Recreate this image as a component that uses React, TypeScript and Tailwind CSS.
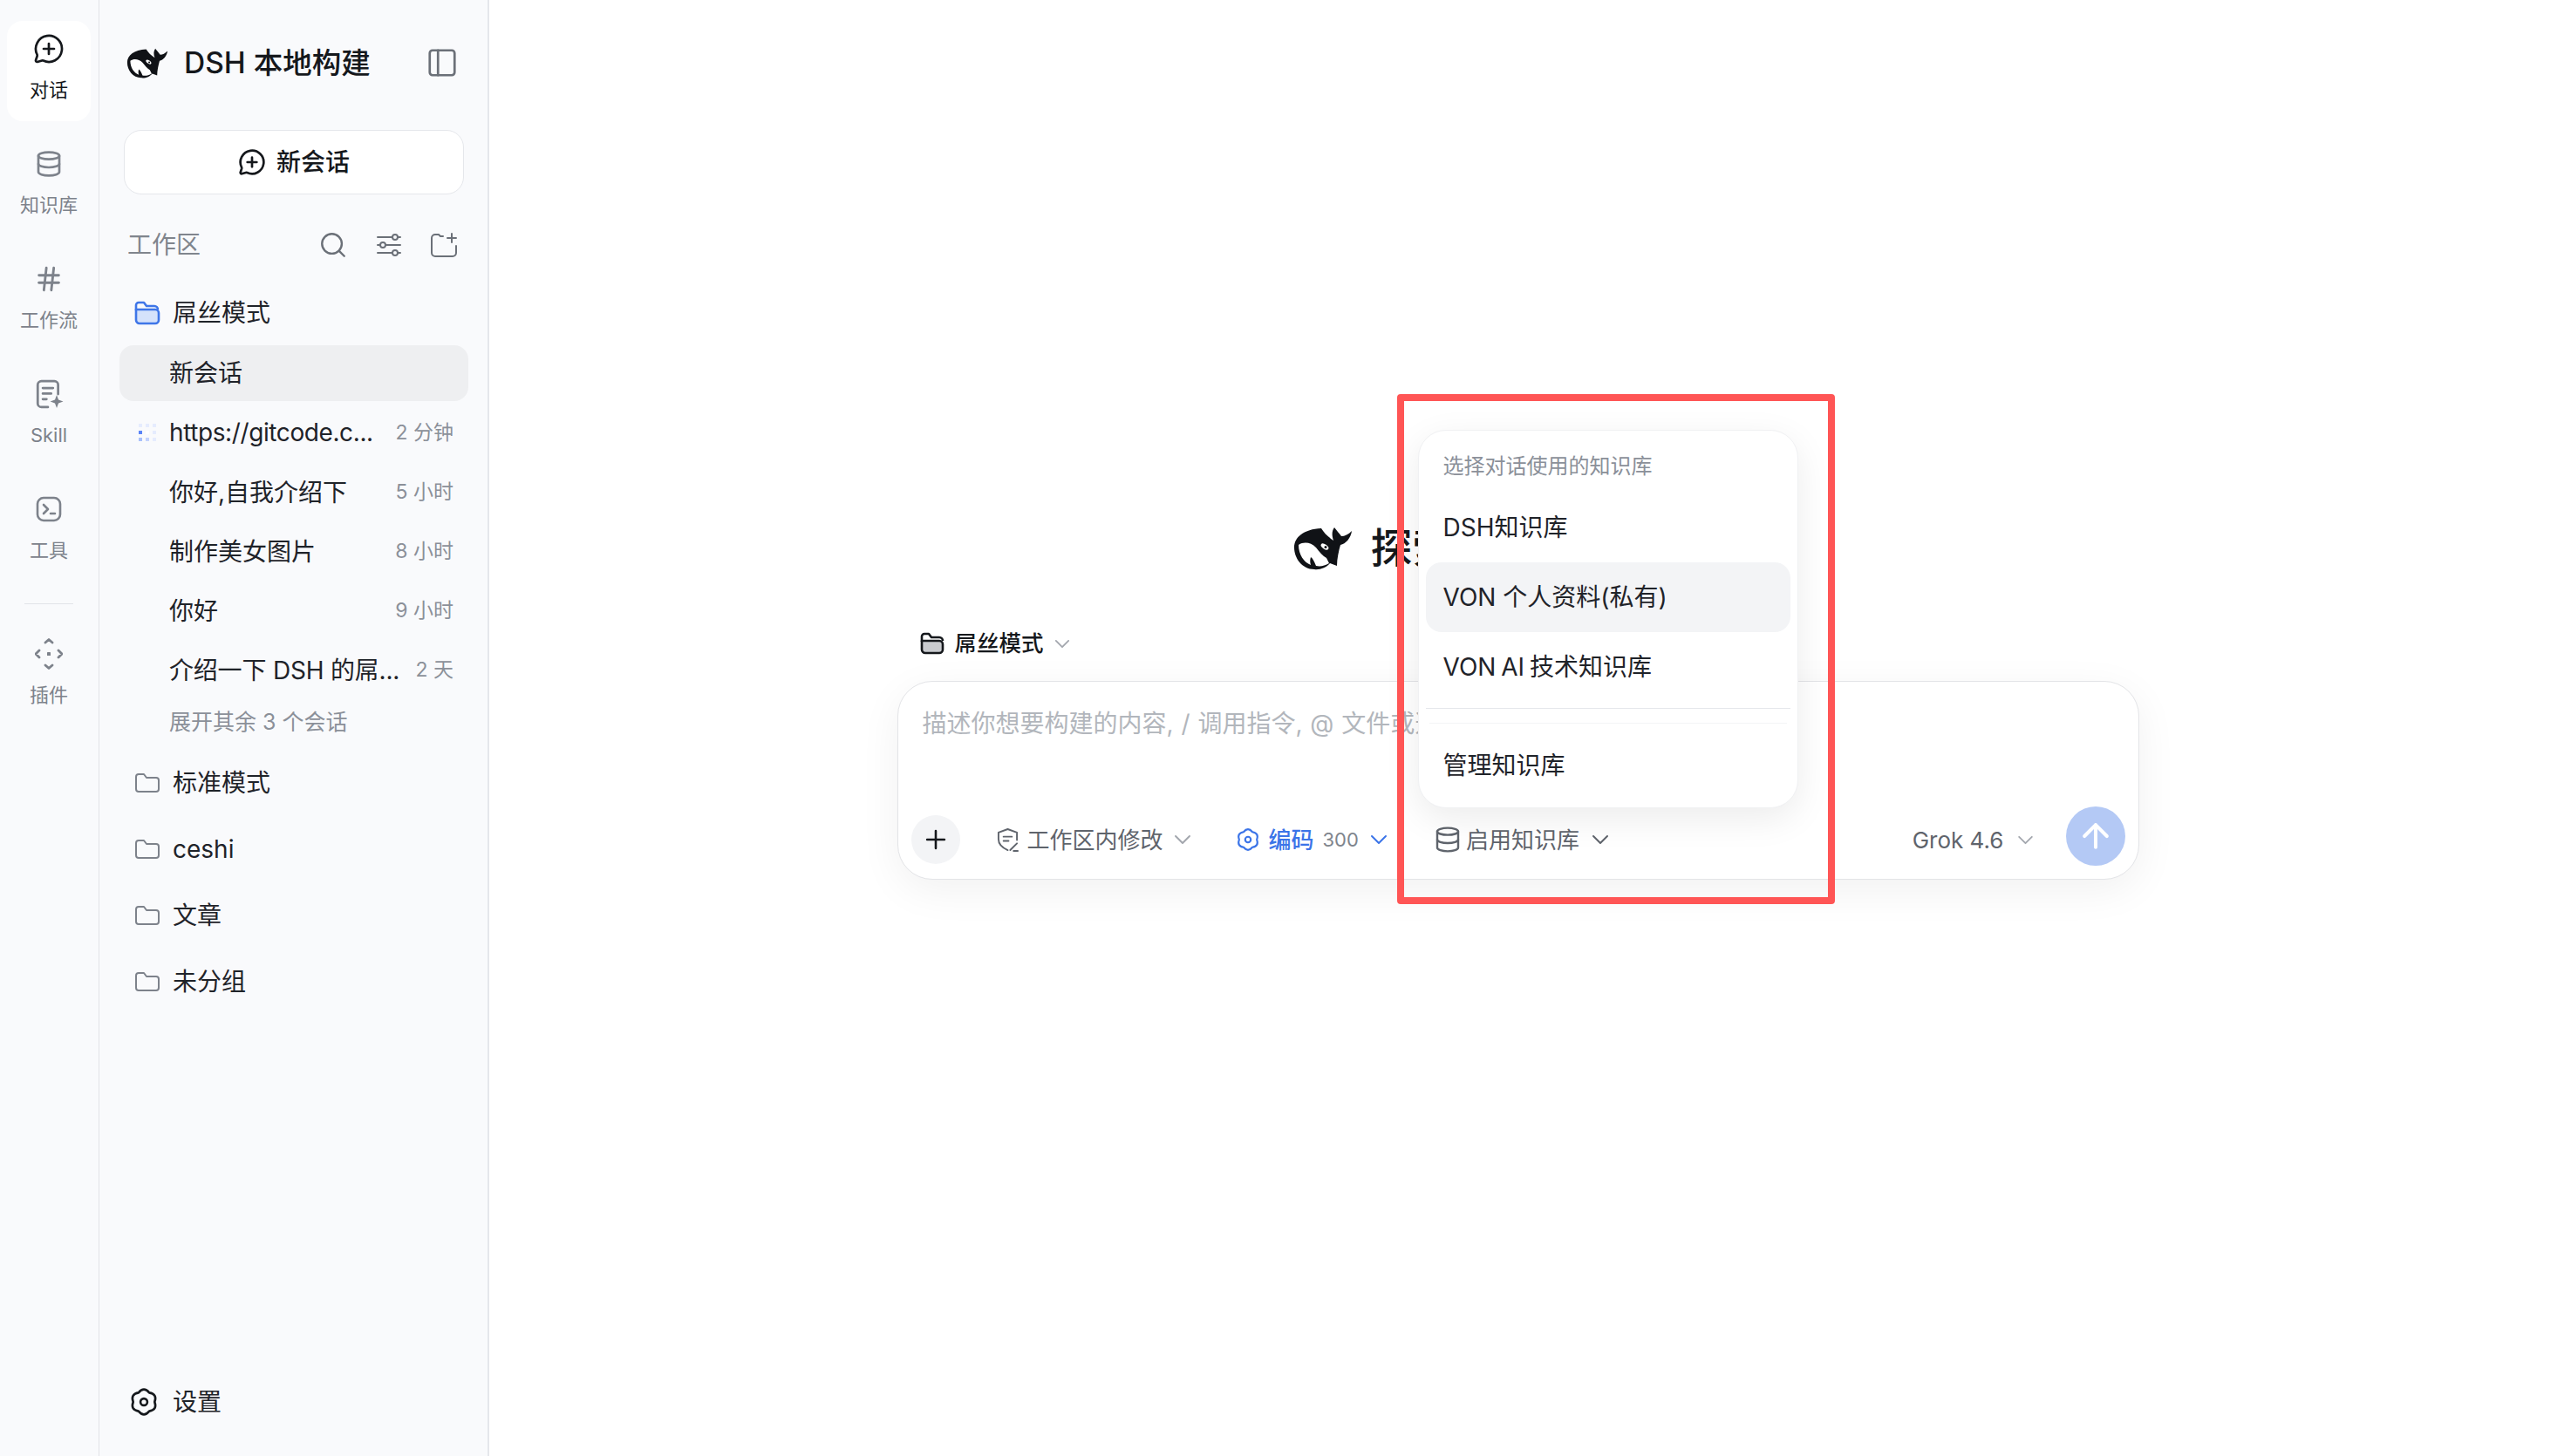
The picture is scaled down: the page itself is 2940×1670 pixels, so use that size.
import { ArrowUp, Database, Hash, MessageCirclePlus, PanelLeft, Plus, Search } from 'lucide-react';

// rounded six lobe gear used by settings and the coding mode
function flowerPath() {
  const pt = (r: number, deg: number) => {
    const a = (deg * Math.PI) / 180;
    return `${(12 + r * Math.cos(a)).toFixed(2)} ${(12 + r * Math.sin(a)).toFixed(2)}`;
  };
  let d = `M${pt(9.4, -60)}`;
  for (let i = 0; i < 6; i++) {
    const s = -60 + i * 60;
    d += ` Q${pt(13.8, s + 30)} ${pt(9.4, s + 60)}`;
  }
  return d + 'Z';
}

function Gear({ className }: { className: string }) {
  return (
    <svg viewBox="-1 -1 26 26" fill="none" stroke="currentColor" strokeWidth="2" strokeLinejoin="round" className={className}>
      <path d={flowerPath()} />
      <circle cx="12" cy="12" r="3" />
    </svg>
  );
}

function Whale({ className }: { className: string }) {
  return (
    <svg viewBox="0 0 68 50" className={className}>
      <path
        fill="#101216"
        d="M1 24C1 12 12 3 32 2C35 7 40 12 46 16C44 10 44 5 47 1C50 5 53 8 55 11C59 11 63 9 67 5C66 13 60 20 54 21C52 28 50 37 50 45L42 42C38 47 30 50 24 49C10 49 1 36 1 24Z"
      />
      <path
        fill="#fff"
        d="M6 21C12 17 20 18 26 24C30 29 34 34 38 36L41 42C36 45 31 46 26 45C24 40 22 36 20 35C19 38 19 41 20 44C12 41 6 32 6 21Z"
      />
      <ellipse cx="36" cy="23" rx="5" ry="2.6" transform="rotate(35 36 23)" fill="#fff" />
      <circle cx="37" cy="23.5" r="1.5" fill="#101216" />
    </svg>
  );
}

function Chevron({ className }: { className: string }) {
  return (
    <svg viewBox="0 0 20 12" fill="none" stroke="currentColor" strokeWidth="2" strokeLinecap="round" strokeLinejoin="round" className={className}>
      <path d="M2 2l8 8 8-8" />
    </svg>
  );
}

function SkillIcon() {
  return (
    <svg viewBox="0 0 32 32" fill="none" stroke="currentColor" strokeWidth="2.6" strokeLinecap="round" strokeLinejoin="round" className="w-[34px] h-[34px]">
      <path d="M15 30H8a4 4 0 0 1-4-4V6a4 4 0 0 1 4-4h14a4 4 0 0 1 4 4v10" />
      <path d="M9.5 9.5h11M9.5 15.5h9M9.5 21.5h4" />
      <path fill="currentColor" stroke="none" d="M24.5 17l1.9 5.1 5.1 1.9-5.1 1.9-1.9 5.1-1.9-5.1-5.1-1.9 5.1-1.9z" />
    </svg>
  );
}

function TerminalIcon() {
  return (
    <svg viewBox="0 0 30 30" fill="none" stroke="currentColor" strokeWidth="2.6" strokeLinecap="round" strokeLinejoin="round" className="w-[30px] h-[30px]">
      <rect x="2" y="2" width="26" height="26" rx="7" />
      <path d="M9 10l5 5-5 5M17 20h5" />
    </svg>
  );
}

function PluginIcon() {
  return (
    <svg viewBox="0 0 32 36" fill="none" stroke="currentColor" strokeWidth="2.8" strokeLinecap="round" strokeLinejoin="round" className="w-[32px] h-[36px]">
      <path d="M12 5l4-3.5L20 5M12 31l4 3.5 4-3.5M5 14l-4 4 4 4M27 14l4 4-4 4" />
      <rect x="14" y="16" width="4" height="4" fill="currentColor" stroke="none" rx="0.6" />
    </svg>
  );
}

function FolderOpenBlue() {
  return (
    <svg viewBox="0 0 30 28" className="w-[30px] h-[28px]" fill="none" stroke="#3f76e8" strokeWidth="2.6" strokeLinejoin="round">
      <path fill="#d5e2fb" d="M2 10h22a4 4 0 0 1 4 4v8a4 4 0 0 1-4 4H6a4 4 0 0 1-4-4z" />
      <path d="M2 11V5a3 3 0 0 1 3-3h6l3 4h9a4 4 0 0 1 4 4" />
    </svg>
  );
}

function FolderClosed() {
  return (
    <svg viewBox="0 0 30 26" className="w-[30px] h-[26px]" fill="none" stroke="#7d828b" strokeWidth="2" strokeLinejoin="round">
      <path d="M2 6a3 3 0 0 1 3-3h6l3 4h11a3 3 0 0 1 3 3v10a3 3 0 0 1-3 3H5a3 3 0 0 1-3-3z" />
    </svg>
  );
}

function FolderGray() {
  return (
    <svg viewBox="0 0 28 26" className="w-[28px] h-[26px]" fill="none" stroke="#15181c" strokeWidth="2.6" strokeLinejoin="round">
      <path fill="#c9cbcf" d="M2 10h20a4 4 0 0 1 4 4v6a4 4 0 0 1-4 4H6a4 4 0 0 1-4-4z" />
      <path d="M2 11V5a3 3 0 0 1 3-3h5l3 4h9a4 4 0 0 1 4 4" />
    </svg>
  );
}

function SlidersIcon() {
  return (
    <svg viewBox="0 0 28 28" fill="none" stroke="currentColor" strokeWidth="2" strokeLinecap="round" className="w-[28px] h-[28px]">
      <path d="M1 5h17M24 5h3M1 14h3M10 14h17M1 23h17M24 23h3" />
      <circle cx="21" cy="5" r="3" />
      <circle cx="7" cy="14" r="3" />
      <circle cx="21" cy="23" r="3" />
    </svg>
  );
}

function FolderAddIcon() {
  return (
    <svg viewBox="0 0 30 28" fill="none" stroke="currentColor" strokeWidth="2" strokeLinecap="round" strokeLinejoin="round" className="w-[30px] h-[28px]">
      <path d="M14 4H11L9 2H5a4 4 0 0 0-4 4v17a4 4 0 0 0 4 4h20a4 4 0 0 0 4-4V15" />
      <path d="M24 1v10M19 6h10" />
    </svg>
  );
}

function ShieldEdit() {
  return (
    <svg viewBox="0 0 26 30" fill="none" stroke="currentColor" strokeWidth="2" strokeLinecap="round" strokeLinejoin="round" className="w-[25px] h-[29px]">
      <path d="M13 27C6 24 2 20 2 14V6l11-4 11 4v9" />
      <path d="M8 11h10M8 16h6" />
      <path d="M16 27l8-8M20 28h5" />
    </svg>
  );
}

const rail = [
  { label: '知识库', icon: <Database size={32} strokeWidth={2} /> },
  { label: '工作流', icon: <Hash size={34} strokeWidth={2} /> },
  { label: 'Skill', icon: <SkillIcon /> },
  { label: '工具', icon: <TerminalIcon /> },
];

const chats = [
  { title: '你好,自我介绍下', time: '5 小时' },
  { title: '制作美女图片', time: '8 小时' },
  { title: '你好', time: '9 小时' },
  { title: '介绍一下 DSH 的屌...', time: '2 天', tight: true },
];

const dots = ['#e5ecfe', '#e5ecfe', '#e5ecfe', '#5b85f7', '#ffffff', '#e5ecfe', '#a8bffb', '#c4d3fd', '#e5ecfe'];

function RailItem({ label, icon, active }: { label: string; icon: React.ReactNode; active?: boolean }) {
  return (
    <div className={`h-[115px] w-[96px] rounded-[18px] flex flex-col items-center ${active ? 'bg-white text-[#15181c]' : 'text-[#7d828b]'}`}>
      <div className="h-[32px] mt-[16px] flex items-center justify-center">{icon}</div>
      <div className="mt-[16px] text-[22px] leading-[30px]">{label}</div>
    </div>
  );
}

function FolderRow({ label }: { label: string }) {
  return (
    <div className="h-[76px] pl-[17px] flex items-center gap-[14px] text-[28px] text-[#1f2329]">
      <FolderClosed />
      {label}
    </div>
  );
}

export default function App() {
  return (
    <div
      className="relative w-[2940px] h-[1670px] flex bg-white overflow-hidden text-[#1f2329]"
      style={{ fontFamily: 'Inter, "Noto Sans CJK SC", sans-serif' }}
    >
      {/* icon rail */}
      <aside className="w-[114px] shrink-0 bg-[#f9fafc] border-r border-[#e2e4e8] pt-[24px] pl-[8px] flex flex-col">
        <RailItem active label="对话" icon={<MessageCirclePlus size={36} strokeWidth={1.8} />} />
        <div className="mt-[17px] flex flex-col gap-[17px]">
          {rail.map((r) => (
            <RailItem key={r.label} label={r.label} icon={r.icon} />
          ))}
        </div>
        <div className="mt-[25px] ml-[20px] w-[56px] h-px bg-[#e2e4e8]" />
        <div className="mt-[25px]">
          <RailItem label="插件" icon={<PluginIcon />} />
        </div>
      </aside>

      {/* session list */}
      <aside className="w-[447px] shrink-0 bg-[#f9fafc] border-r-2 border-[#e5e7eb] flex flex-col">
        <div className="h-[144px] pl-[31px] pr-[33px] flex items-center">
          <Whale className="w-[48px] h-[35px]" />
          <span className="ml-[18px] text-[33.5px] font-medium text-[#15181c] whitespace-nowrap">DSH 本地构建</span>
          <PanelLeft size={38} strokeWidth={1.7} className="ml-auto text-[#6b7078]" />
        </div>

        <div className="mt-[5px] ml-[28px] mr-[27px] h-[74px] bg-white border border-[#e5e7eb] rounded-[20px] flex items-center justify-center gap-[12px] text-[28px] font-medium text-[#15181c]">
          <MessageCirclePlus size={32} strokeWidth={2} />
          新会话
        </div>

        <div className="mt-[34px] h-[48px] pl-[32px] pr-[35px] flex items-center text-[#6b7078]">
          <span className="text-[28px] text-[#80858d]">工作区</span>
          <Search size={34} strokeWidth={1.7} className="ml-auto" />
          <div className="ml-[33px]">
            <SlidersIcon />
          </div>
          <div className="ml-[34px]">
            <FolderAddIcon />
          </div>
        </div>

        <div className="mt-[15px] ml-[23px] mr-[22px] flex flex-col">
          <div className="h-[76px] pl-[17px] pt-[1px] flex items-center gap-[14px] text-[28px]">
            <FolderOpenBlue />
            屌丝模式
          </div>
          <div className="h-[64px] pl-[57px] bg-[#eeeff1] rounded-[16px] flex items-center text-[28px]">新会话</div>

          <div className="mt-[4px] h-[64px] pr-[17px] flex items-center text-[28px]">
            <div className="ml-[22px] w-[20px] h-[20px] grid grid-cols-3 gap-[4px]">
              {dots.map((c, i) => (
                <span key={i} className="w-[4px] h-[4px]" style={{ backgroundColor: c }} />
              ))}
            </div>
            <span className="ml-[15px] tracking-[-0.4px]">https://gitcode.c...</span>
            <span className="ml-auto text-[23px] text-[#8b9099]">2 分钟</span>
          </div>
          {chats.map((c) => (
            <div key={c.time} className="mt-[4px] h-[64px] pl-[57px] pr-[17px] pt-[1px] flex items-center text-[28px] whitespace-nowrap">
              <span className={c.tight ? 'tracking-[-0.2px]' : ''}>{c.title}</span>
              <span className="ml-auto text-[23px] text-[#8b9099]">{c.time}</span>
            </div>
          ))}
          <div className="mt-[4px] h-[48px] pl-[57px] pt-[2px] flex items-center text-[25px] text-[#8b9099]">展开其余 3 个会话</div>

          <div className="mt-[8px]">
            <FolderRow label="标准模式" />
            <FolderRow label="ceshi" />
            <FolderRow label="文章" />
            <FolderRow label="未分组" />
          </div>
        </div>

        <div className="mt-auto mb-[24px] h-[76px] pl-[34px] flex items-center gap-[16px] text-[28px]">
          <Gear className="w-[34px] h-[34px] text-[#15181c]" />
          设置
        </div>
      </aside>

      {/* main */}
      <main className="flex-1 pr-[20px] pt-[604px] flex flex-col items-center">
        <div className="w-[1424px]">
          <div className="flex justify-center">
            <div className="flex items-center gap-[21px]">
              <Whale className="w-[68px] h-[50px]" />
              <div className="w-[427px] text-[48px] leading-[50px] font-medium text-[#15181c] whitespace-nowrap">探索 DSH 的无限可能</div>
            </div>
          </div>

          <div className="mt-[62px] h-[44px] pl-[26px] flex items-center text-[#15181c]">
            <FolderGray />
            <span className="ml-[12px] text-[25.5px] font-medium">屌丝模式</span>
            <Chevron className="ml-[12px] w-[18px] h-[11px] text-[#a3a7ae]" />
          </div>

          <div className="relative mt-[21px] h-[228px] bg-white border border-[#e3e4e7] rounded-[40px] shadow-[0_12px_48px_rgba(0,0,0,0.06)] flex flex-col">
            <div className="mt-[30px] ml-[28px] text-[28px] leading-[36px] text-[#b2b6bc] whitespace-nowrap [word-spacing:1px]">
              描述你想要构建的内容, / 调用指令, @ 文件或选择技能
            </div>

            <div className="mt-auto mb-[17px] h-[56px] pl-[15px] pr-[15px] flex items-center text-[26px] text-[#5f646c] whitespace-nowrap">
              <div className="w-[56px] h-[56px] rounded-full bg-[#f3f4f6] flex items-center justify-center text-[#15181c]">
                <Plus size={34} strokeWidth={1.8} />
              </div>

              <div className="ml-[42px]">
                <ShieldEdit />
              </div>
              <span className="ml-[10px]">工作区内修改</span>
              <Chevron className="ml-[12px] w-[20px] h-[12px] text-[#a3a7ae]" />

              <Gear className="ml-[51px] w-[28px] h-[28px] text-[#3b74e8]" />
              <span className="ml-[10px] font-medium text-[#3b74e8]">编码</span>
              <span className="ml-[10px] text-[22px] text-[#80858d]">300</span>
              <Chevron className="ml-[13px] w-[20px] h-[12px] text-[#3b74e8]" />

              <Database size={32} strokeWidth={1.8} className="ml-[53px] text-[#5f646c]" />
              <span className="ml-[5px]">启用知识库</span>
              <Chevron className="ml-[14px] w-[20px] h-[12px] text-[#5f646c]" />

              <span className="ml-auto text-[26px]">Grok 4.6</span>
              <Chevron className="ml-[15px] w-[19px] h-[11px] text-[#a3a7ae]" />
              <div className="ml-[37px] -mt-[8px] w-[68px] h-[68px] rounded-full bg-[#b4c9f5] flex items-center justify-center text-white shrink-0">
                <ArrowUp size={44} strokeWidth={2.2} />
              </div>
            </div>

            {/* knowledge base dropdown */}
            <div className="absolute left-[596px] bottom-[81px] w-[436px] h-[434px] bg-white border border-[#f0f1f3] rounded-[32px] shadow-[0_12px_40px_rgba(0,0,0,0.08)] px-[8px] flex flex-col text-[28px] text-[#1f2329] z-10">
              <div className="mt-[25px] ml-[20px] text-[24px] leading-[32px] text-[#8b9099]">选择对话使用的知识库</div>
              <div className="mt-[14px] h-[80px] pl-[20px] flex items-center">DSH知识库</div>
              <div className="h-[80px] pl-[20px] flex items-center bg-[#f3f4f6] rounded-[18px]">VON 个人资料(私有)</div>
              <div className="h-[80px] pl-[20px] flex items-center [word-spacing:-2px]">VON AI 技术知识库</div>
              <div className="mt-[7px] h-px bg-[#e5e7eb]" />
              <div className="mt-[16px] mx-[4px] h-px bg-[#f3f4f6]" />
              <div className="mt-[8px] h-[80px] pl-[20px] flex items-center">管理知识库</div>
            </div>
          </div>
        </div>
      </main>

      {/* red annotation box */}
      <div className="absolute left-[1602px] top-[452px] w-[502px] h-[585px] border-[8px] border-[#ff5555] rounded-[4px] z-20" />
    </div>
  );
}
